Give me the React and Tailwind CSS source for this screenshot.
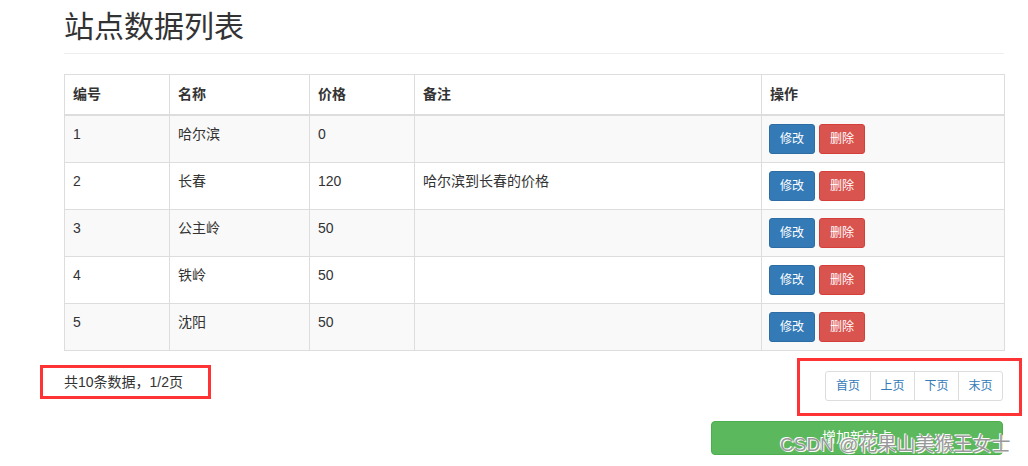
import React from "react";

const rows = [
  { id: 1, name: "哈尔滨", price: "0", note: "" },
  { id: 2, name: "长春", price: "120", note: "哈尔滨到长春的价格" },
  { id: 3, name: "公主岭", price: "50", note: "" },
  { id: 4, name: "铁岭", price: "50", note: "" },
  { id: 5, name: "沈阳", price: "50", note: "" },
];

const pages = ["首页", "上页", "下页", "末页"];

export default function App() {
  return (
    <div
      className="relative w-[1028px] h-[466px] overflow-hidden bg-white text-[#333] text-[14px]"
      style={{ fontFamily: '"Liberation Sans", "Noto Sans CJK SC", sans-serif' }}
    >
      <div className="ml-[64px] w-[940px]">
        {/* Title */}
        <div className="pt-[7px] pb-[6px] border-b border-[#eee]">
          <h1 className="text-[30px] leading-[40px] font-normal">站点数据列表</h1>
        </div>

        {/* Table */}
        <table className="mt-[20px] w-[940px] border-collapse table-fixed">
          <colgroup>
            <col className="w-[105px]" />
            <col className="w-[140px]" />
            <col className="w-[105px]" />
            <col className="w-[347px]" />
            <col className="w-[243px]" />
          </colgroup>
          <thead>
            <tr className="h-[40px]">
              {["编号", "名称", "价格", "备注", "操作"].map((h) => (
                <th
                  key={h}
                  className="border border-[#ddd] border-b-2 px-[8px] text-left align-middle font-bold leading-[20px]"
                >
                  {h}
                </th>
              ))}
            </tr>
          </thead>
          <tbody>
            {rows.map((r, i) => (
              <tr key={r.id} className={`h-[47px] ${i % 2 === 0 ? "bg-[#f9f9f9]" : "bg-white"}`}>
                <td className="border border-[#ddd] px-[8px] pt-[8px] align-top leading-[20px]">{r.id}</td>
                <td className="border border-[#ddd] px-[8px] pt-[8px] align-top leading-[20px]">{r.name}</td>
                <td className="border border-[#ddd] px-[8px] pt-[8px] align-top leading-[20px]">{r.price}</td>
                <td className="border border-[#ddd] px-[8px] pt-[8px] align-top leading-[20px]">{r.note}</td>
                <td className="border border-[#ddd] px-[7px] pt-[8px] pb-[8px] align-top">
                  <div className="flex gap-[4px]">
                    <button className="h-[30px] px-[10px] text-[12px] leading-[18px] text-white bg-[#337ab7] border border-[#2e6da4] rounded-[3px]">
                      修改
                    </button>
                    <button className="h-[30px] px-[10px] text-[12px] leading-[18px] text-white bg-[#d9534f] border border-[#d43f3a] rounded-[3px]">
                      删除
                    </button>
                  </div>
                </td>
              </tr>
            ))}
          </tbody>
        </table>

        {/* Footer */}
        <div className="mt-[20px] flex justify-between items-start">
          <div className="pt-[1px] text-[14px] leading-[20px]">共10条数据，1/2页</div>
          <div className="flex mr-[1px] border border-[#ddd] rounded-[3px]">
            {pages.map((p, i) => (
              <a
                key={p}
                className={`h-[28px] w-[44px] flex items-center justify-center text-[12px] text-[#337ab7] ${
                  i > 0 ? "border-l border-[#ddd]" : ""
                }`}
              >
                {p}
              </a>
            ))}
          </div>
        </div>

        <div className="mt-[20px] flex justify-end">
          <button className="w-[292px] h-[34px] mr-[1px] bg-[#5cb85c] border border-[#4cae4c] rounded-[4px] text-white text-[14px]">
            增加新站点
          </button>
        </div>
      </div>

      {/* Red annotation boxes */}
      <div className="absolute left-[40px] top-[365px] w-[171px] h-[34px] border-[3px] border-[#f33]" />
      <div className="absolute left-[797px] top-[358px] w-[225px] h-[58px] border-[3px] border-[#f33]" />

      {/* Watermark */}
      <div
        className="absolute left-[780px] top-[433px] text-[19px] leading-[24px] text-[#999] whitespace-nowrap"
        style={{ textShadow: "0 0 1px #fff, 1px 1px 0 #fff, -1px -1px 0 #fff" }}
      >
        CSDN @花果山美猴王女士
      </div>
    </div>
  );
}
